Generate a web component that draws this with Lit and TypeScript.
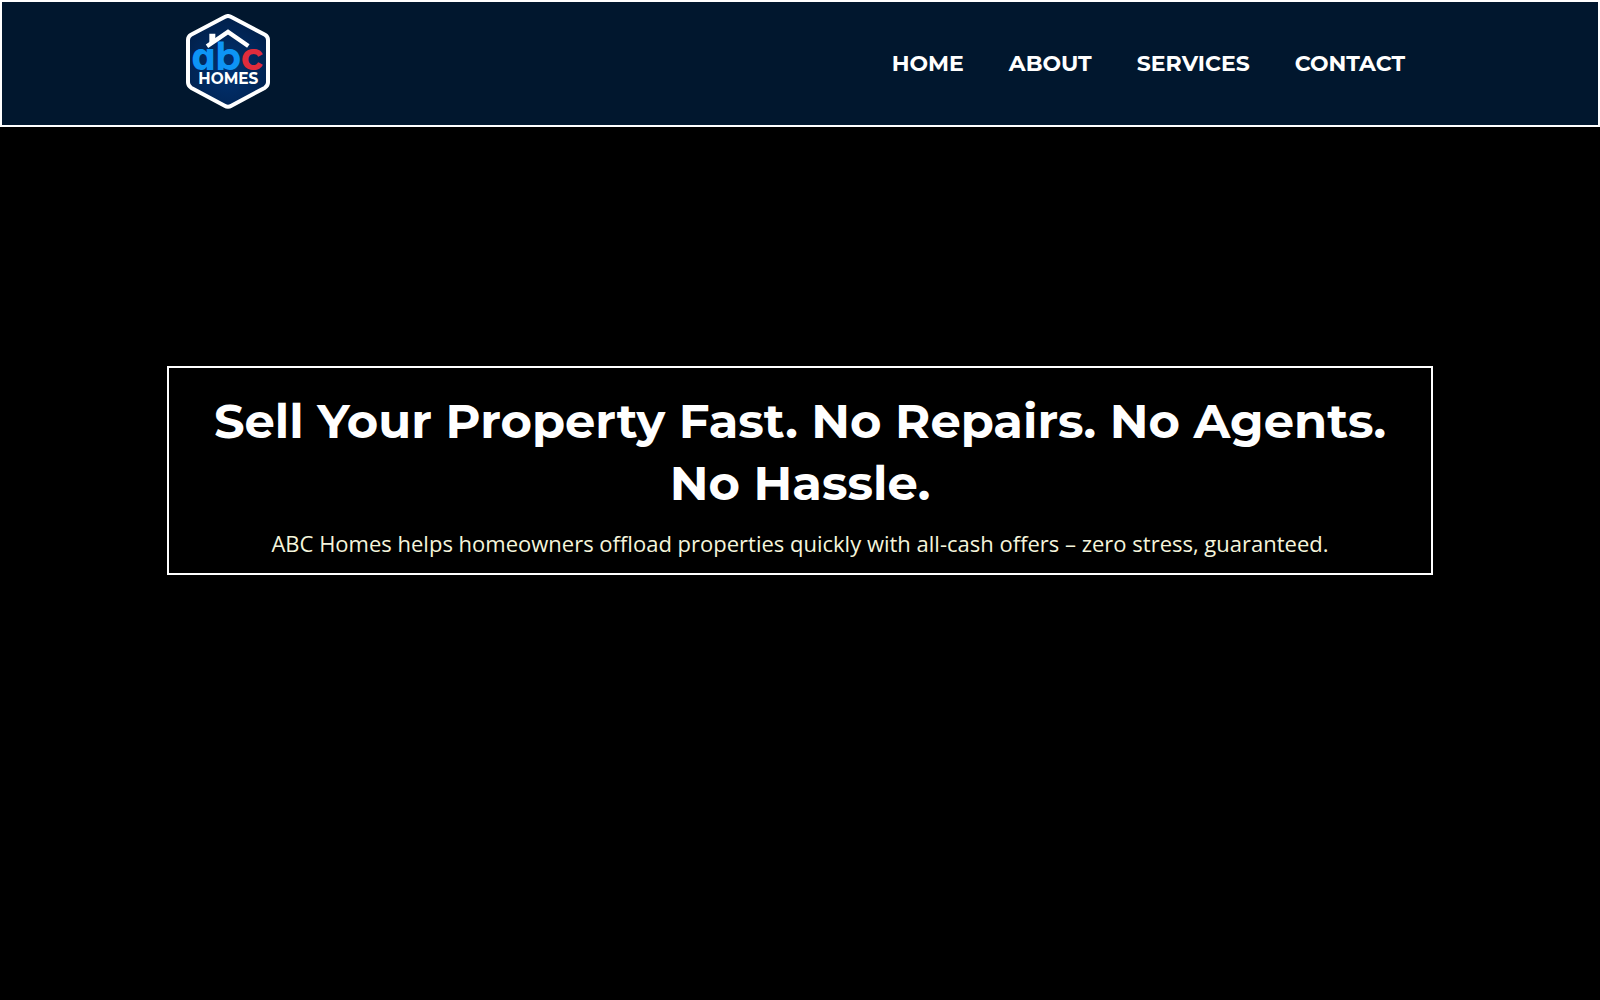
import { LitElement, html, css, svg } from "lit";
import { customElement } from "lit/decorators.js";

const LINKS = ["Home", "About", "Services", "Contact"];

@customElement("abc-logo")
class AbcLogo extends LitElement {
  static styles = css`
    :host {
      display: block;
    }
    .mark {
      display: block;
      width: 84px;
      height: 96px;
    }
    .letters {
      font: 700 112px Montserrat, sans-serif;
      fill: #0d94f5;
      text-anchor: middle;
    }
    .round {
      font-family: Inter, sans-serif;
      font-weight: 800;
      font-feature-settings: "cv11";
    }
    .red {
      fill: #e02c3c;
    }
    .name {
      font: 700 46px Montserrat, sans-serif;
      fill: #fff;
      text-anchor: middle;
    }
  `;

  render() {
    return html`<svg class="mark" viewBox="48 42 252 288" role="img" aria-label="ABC Homes">
      <defs>
        <radialGradient id="navy" cx="50%" cy="60%" r="60%">
          <stop offset="0" stop-color="#013272" />
          <stop offset="1" stop-color="#01204b" />
        </radialGradient>
      </defs>
      ${svg`
        <path d="M164 51Q174 45 184 51L285 104Q294 109 294 120V247Q294 257 285 263L184 317Q174 323 164 317L63 263Q54 257 54 247V120Q54 109 63 104Z"
          fill="url(#navy)" stroke="#fff" stroke-width="12" stroke-linejoin="round" />
        <text class="letters" x="172" y="209"><tspan class="round">a</tspan><tspan>b</tspan><tspan class="red">c</tspan></text>
        <path d="M111 139L174 96L235 138" fill="none" stroke="#fff" stroke-width="13" />
        <path d="M118 101H136V122L118 134Z" fill="#fff" />
        <text class="name" x="175" y="253">HOMES</text>
      `}
    </svg>`;
  }
}

@customElement("app-root")
class AppRoot extends LitElement {
  static styles = css`
    :host {
      display: block;
      min-height: 100vh;
      background: #000;
      color: #fff;
      font-family: "Open Sans", sans-serif;
    }
    * {
      box-sizing: border-box;
    }
    .header {
      background: #01172e;
      border: 2px solid #fff;
    }
    .bar {
      display: flex;
      align-items: center;
      justify-content: space-between;
      max-width: 1266px;
      margin: 0 auto;
      padding: 12px 28px 15px 19px;
    }
    .home {
      display: block;
    }
    .nav {
      display: flex;
      gap: 45px;
      padding-top: 4px;
    }
    .link {
      font: 700 22px/32px Montserrat, Inter, sans-serif;
      text-transform: uppercase;
      text-decoration: none;
      color: #fff;
    }
    .hero {
      padding: 239px 20px;
    }
    .panel {
      max-width: 1266px;
      margin: 0 auto;
      padding: 22px 32px 12px;
      border: 2px solid #fff;
      text-align: center;
    }
    .title {
      margin: 0 0 11px;
      font: 700 48px/62px Montserrat, Inter, sans-serif;
    }
    .lead {
      margin: 0;
      font-size: 22px;
      line-height: 36px;
      color: #f5f5dc;
    }
  `;

  render() {
    return html`
      <header class="header">
        <div class="bar">
          <a class="home" href="#home"><abc-logo></abc-logo></a>
          <nav class="nav">
            ${LINKS.map((l) => html`<a class="link" href="#${l.toLowerCase()}">${l}</a>`)}
          </nav>
        </div>
      </header>
      <main class="hero">
        <section class="panel">
          <h1 class="title">Sell Your Property Fast. No Repairs. No Agents. No Hassle.</h1>
          <p class="lead">
            ABC Homes helps homeowners offload properties quickly with all-cash offers – zero stress, guaranteed.
          </p>
        </section>
      </main>
    `;
  }
}
